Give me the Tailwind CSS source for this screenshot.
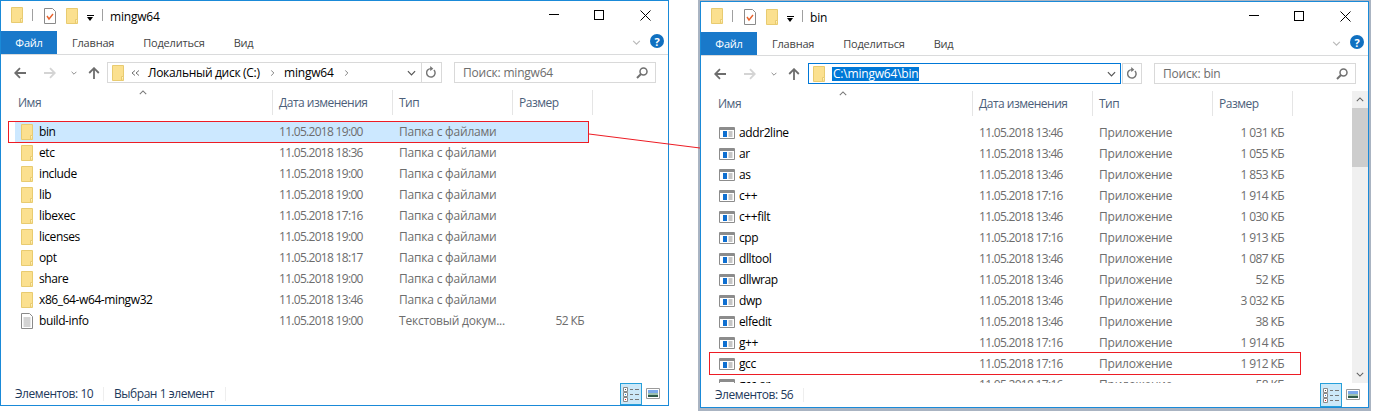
<!doctype html>
<html lang="en">
  <head>
    <meta charset="UTF-8" />
    <title>mingw64 / bin</title>
    <script src="https://cdn.jsdelivr.net/npm/@tailwindcss/browser@4"></script>
  </head>
  <body class="relative w-[1374px] h-[411px] overflow-hidden bg-white font-['Open_Sans',sans-serif] text-[12px] leading-none tracking-[-0.2px]">
    <svg class="hidden">
      <symbol id="folder" viewBox="0 0 12 16">
        <path d="M.5.5h11v15H.5z" fill="#fbe08f" stroke="#e8cb70" />
        <path d="M9.5 15.5v-4h2" fill="#fff3c4" stroke="#e8cb70" />
      </symbol>
      <symbol id="app" viewBox="0 0 16 12">
        <path d="M.5.5h15v11H.5z" fill="#fff" stroke="#8c8c8c" />
        <path d="M1 1h14v2H1z" fill="#8c8c8c" />
        <path d="M4 4h4v6H4z" fill="#0f6fd0" />
        <path d="M9.5 5h4M9.5 7h4M9.5 9h4" stroke="#8c8c8c" />
      </symbol>
      <symbol id="doc" viewBox="0 0 12 16">
        <path d="M.5.5h8l3 3v12H.5z" fill="#fff" stroke="#8a8a8a" />
        <path d="M2.5 5h7M2.5 7h7M2.5 9h7M2.5 11h7M2.5 13h7" stroke="#a8a8a8" />
      </symbol>
      <symbol id="check" viewBox="0 0 12 16">
        <path d="M.5.5h8l3 3v12H.5z" fill="#fff" stroke="#8a8a8a" />
        <path d="M3 8l2 3 4-5" fill="none" stroke="#e8622c" stroke-width="1.4" />
      </symbol>
      <symbol id="back" viewBox="0 0 12 12">
        <path d="M12 6H1.5M6 1.2 1.2 6 6 10.8" fill="none" stroke="currentColor" stroke-width="1.8" />
      </symbol>
      <symbol id="forward" viewBox="0 0 12 12">
        <path d="M0 6h10.5M6 1.2 10.8 6 6 10.8" fill="none" stroke="currentColor" stroke-width="1.8" />
      </symbol>
      <symbol id="up" viewBox="0 0 12 12">
        <path d="M6 12V1.5M1.2 6 6 1.2 10.8 6" fill="none" stroke="currentColor" stroke-width="1.8" />
      </symbol>
      <symbol id="chev" viewBox="0 0 10 6">
        <path d="M1 1l4 4 4-4" fill="none" stroke="currentColor" stroke-width="1.3" />
      </symbol>
      <symbol id="dbl" viewBox="0 0 9 6">
        <path d="M4 .5 1 3l3 2.5M8 .5 5 3l3 2.5" fill="none" stroke="currentColor" />
      </symbol>
      <symbol id="refresh" viewBox="0 0 12 14">
        <path d="M8.6 4.2a4.6 4.6 0 1 1-3-1.4" fill="none" stroke="currentColor" stroke-width="1.6" />
        <path d="M4.6 0v5.4L8 2.8z" fill="currentColor" />
      </symbol>
      <symbol id="search" viewBox="0 0 12 12">
        <circle cx="7.5" cy="4.5" r="3.5" fill="none" stroke="currentColor" stroke-width="1.5" />
        <path d="M5 7l-4 4" stroke="currentColor" stroke-width="2" />
      </symbol>
      <symbol id="details" viewBox="0 0 16 15">
        <path d="M.5.5h4v4h-4zM.5 5.5h4v4h-4zM.5 10.5h4v4h-4z" fill="#fff" stroke="#8a8a8a" />
        <path d="M2 2h1v1H2z" fill="#555" />
        <path d="M2 7h1v1H2z" fill="#2a80d0" />
        <path d="M2 12h1v1H2z" fill="#e02020" />
        <path d="M7 2.5h3M12 2.5h4M7 7.5h3M12 7.5h4M7 12.5h3M12 12.5h4" stroke="#777" />
      </symbol>
      <symbol id="preview" viewBox="0 0 14 11">
        <path d="M.5.5h13v10H.5z" fill="#fff" stroke="#9a9a9a" />
        <path d="M2 2h10v3H2z" fill="#7aa8ea" />
        <path d="M2 5h10v2H2z" fill="#9cc0b0" />
        <path d="M2 7h10v2H2z" fill="#2f5a4a" />
      </symbol>
    </svg>

    <div class="flex items-start">
      <!-- left window -->
      <div class="flex flex-col w-[669px] h-[406px] border border-[#1a8ad8] bg-white">
        <div class="relative h-[30px] shrink-0 flex items-center">
          <svg class="absolute left-[10px] top-[6px] w-[12px] h-[16px]"><use href="#folder" /></svg>
          <span class="absolute left-[31px] top-[8px] w-px h-[12px] bg-[#a0a0a0]"></span>
          <svg class="absolute left-[43px] top-[7px] w-[12px] h-[16px]"><use href="#check" /></svg>
          <svg class="absolute left-[65px] top-[7px] w-[12px] h-[16px]"><use href="#folder" /></svg>
          <span class="absolute left-[86px] top-[14px] w-[7px] h-px bg-black"></span>
          <span class="absolute left-[86px] top-[16px] border-x-[3.5px] border-t-[4px] border-x-transparent border-t-black"></span>
          <span class="absolute left-[101px] top-[8px] w-px h-[12px] bg-[#a0a0a0]"></span>
          <span class="absolute left-[109px] top-[10px] text-black">mingw64</span>
          <svg class="absolute left-[548px] top-[13px] w-[10px] h-px"><rect width="10" height="1" /></svg>
          <span class="absolute left-[593px] top-[9px] w-[10px] h-[10px] border border-black"></span>
          <svg class="absolute left-[639px] top-[9px] w-[11px] h-[11px]" viewBox="0 0 11 11"><path d="M.5.5l10 10M10.5.5l-10 10" stroke="#000" /></svg>
        </div>
        <div class="relative h-[24px] shrink-0 flex items-start border-b border-[#dadbdc] text-[#444] text-[11px]">
          <span class="w-[56px] h-[23px] bg-[#1979ca] text-white flex items-center justify-center">Файл</span>
          <span class="ml-[15px] h-[23px] flex items-center">Главная</span>
          <span class="ml-[29px] h-[23px] flex items-center">Поделиться</span>
          <span class="ml-[29px] h-[23px] flex items-center">Вид</span>
          <svg class="absolute left-[631px] top-[9px] w-[9px] h-[5px] text-[#b8b8b8]"><use href="#chev" /></svg>
          <span class="absolute left-[649px] top-[3px] w-[14px] h-[14px] rounded-full bg-[#1070c0] text-white font-bold text-[11px] flex items-center justify-center">?</span>
        </div>
        <div class="h-[35px] shrink-0 flex items-center text-[#6d6d6d]">
          <svg class="ml-[13px] w-[12px] h-[12px]"><use href="#back" /></svg>
          <svg class="ml-[18px] w-[12px] h-[12px] text-[#d4d4d4]"><use href="#forward" /></svg>
          <svg class="ml-[15px] w-[6px] h-[4px]"><use href="#chev" /></svg>
          <svg class="ml-[11px] w-[12px] h-[12px]"><use href="#up" /></svg>
          <div class="ml-[7px] w-[315px] h-[21px] border border-[#d9d9d9] flex items-center text-black">
            <svg class="ml-[4px] w-[12px] h-[16px]"><use href="#folder" /></svg>
            <svg class="ml-[7px] w-[9px] h-[6px] text-[#707070]"><use href="#dbl" /></svg>
            <span class="ml-[8px] w-[121px] tracking-[-0.3px]">Локальный диск (C:)</span>
            <svg class="-rotate-90 w-[7px] h-[4px] text-[#707070]"><use href="#chev" /></svg>
            <span class="ml-[8px]">mingw64</span>
            <svg class="ml-[9px] -rotate-90 w-[7px] h-[4px] text-[#707070]"><use href="#chev" /></svg>
            <svg class="ml-auto mr-[5px] w-[9px] h-[6px] text-[#555]"><use href="#chev" /></svg>
          </div>
          <div class="w-[20px] h-[21px] border border-l-0 border-[#d9d9d9] flex items-center justify-center">
            <svg class="w-[11px] h-[13px] text-[#777]"><use href="#refresh" /></svg>
          </div>
          <div class="ml-[12px] w-[202px] h-[21px] border border-[#d9d9d9] flex items-center justify-between pl-[8px] pr-[7px]">
            <span>Поиск: mingw64</span>
            <svg class="w-[12px] h-[12px] text-[#707070]"><use href="#search" /></svg>
          </div>
        </div>
        <div class="relative h-[25px] shrink-0 flex items-center text-[#4c607a] tracking-[-0.5px]">
          <svg class="absolute left-[138px] top-0 w-[8px] h-[5px] rotate-180 text-[#777]"><use href="#chev" /></svg>
          <span class="w-[272px] pl-[17px] h-full flex items-center border-r border-[#e5e5e5]">Имя</span>
          <span class="w-[120px] pl-[6px] h-full flex items-center border-r border-[#e5e5e5]">Дата изменения</span>
          <span class="w-[120px] pl-[6px] h-full flex items-center border-r border-[#e5e5e5]">Тип</span>
          <span class="w-[80px] pl-[6px] h-full flex items-center border-r border-[#e5e5e5]">Размер</span>
        </div>
        <div class="flex-1 overflow-hidden pt-[6px] pl-[14px] text-[#6d6d6d]">
          <div class="grid grid-cols-[264px_120px_120px_69px] w-[573px] h-[21px] items-center bg-[#cce8ff]"><span class="flex items-center gap-[6px] pl-[6px] text-black tracking-[-0.4px]"><svg class="w-[12px] h-[16px]"><use href="#folder" /></svg>bin</span><span class="tracking-[-0.7px]">11.05.2018 19:00</span><span>Папка с файлами</span><span></span></div>
          <div class="grid grid-cols-[264px_120px_120px_69px] w-[573px] h-[21px] items-center"><span class="flex items-center gap-[6px] pl-[6px] text-black tracking-[-0.4px]"><svg class="w-[12px] h-[16px]"><use href="#folder" /></svg>etc</span><span class="tracking-[-0.7px]">11.05.2018 18:36</span><span>Папка с файлами</span><span></span></div>
          <div class="grid grid-cols-[264px_120px_120px_69px] w-[573px] h-[21px] items-center"><span class="flex items-center gap-[6px] pl-[6px] text-black tracking-[-0.4px]"><svg class="w-[12px] h-[16px]"><use href="#folder" /></svg>include</span><span class="tracking-[-0.7px]">11.05.2018 19:00</span><span>Папка с файлами</span><span></span></div>
          <div class="grid grid-cols-[264px_120px_120px_69px] w-[573px] h-[21px] items-center"><span class="flex items-center gap-[6px] pl-[6px] text-black tracking-[-0.4px]"><svg class="w-[12px] h-[16px]"><use href="#folder" /></svg>lib</span><span class="tracking-[-0.7px]">11.05.2018 19:00</span><span>Папка с файлами</span><span></span></div>
          <div class="grid grid-cols-[264px_120px_120px_69px] w-[573px] h-[21px] items-center"><span class="flex items-center gap-[6px] pl-[6px] text-black tracking-[-0.4px]"><svg class="w-[12px] h-[16px]"><use href="#folder" /></svg>libexec</span><span class="tracking-[-0.7px]">11.05.2018 17:16</span><span>Папка с файлами</span><span></span></div>
          <div class="grid grid-cols-[264px_120px_120px_69px] w-[573px] h-[21px] items-center"><span class="flex items-center gap-[6px] pl-[6px] text-black tracking-[-0.4px]"><svg class="w-[12px] h-[16px]"><use href="#folder" /></svg>licenses</span><span class="tracking-[-0.7px]">11.05.2018 19:00</span><span>Папка с файлами</span><span></span></div>
          <div class="grid grid-cols-[264px_120px_120px_69px] w-[573px] h-[21px] items-center"><span class="flex items-center gap-[6px] pl-[6px] text-black tracking-[-0.4px]"><svg class="w-[12px] h-[16px]"><use href="#folder" /></svg>opt</span><span class="tracking-[-0.7px]">11.05.2018 18:17</span><span>Папка с файлами</span><span></span></div>
          <div class="grid grid-cols-[264px_120px_120px_69px] w-[573px] h-[21px] items-center"><span class="flex items-center gap-[6px] pl-[6px] text-black tracking-[-0.4px]"><svg class="w-[12px] h-[16px]"><use href="#folder" /></svg>share</span><span class="tracking-[-0.7px]">11.05.2018 19:00</span><span>Папка с файлами</span><span></span></div>
          <div class="grid grid-cols-[264px_120px_120px_69px] w-[573px] h-[21px] items-center"><span class="flex items-center gap-[6px] pl-[6px] text-black tracking-[-0.4px]"><svg class="w-[12px] h-[16px]"><use href="#folder" /></svg>x86_64-w64-mingw32</span><span class="tracking-[-0.7px]">11.05.2018 13:46</span><span>Папка с файлами</span><span></span></div>
          <div class="grid grid-cols-[264px_120px_120px_69px] w-[573px] h-[21px] items-center"><span class="flex items-center gap-[6px] pl-[6px] text-black tracking-[-0.4px]"><svg class="w-[12px] h-[16px]"><use href="#doc" /></svg>build-info</span><span class="tracking-[-0.7px]">11.05.2018 19:00</span><span>Текстовый докум...</span><span class="text-right pr-[4px] tracking-[-0.6px]">52 КБ</span></div>
        </div>
        <div class="relative h-[22px] shrink-0 flex items-center text-[#1e395b] tracking-[-0.45px]">
          <span class="ml-[14px] w-[88px]">Элементов: 10</span>
          <span class="w-px h-[14px] bg-[#eeeeee]"></span>
          <span class="ml-[10px] w-[111px]">Выбран 1 элемент</span>
          <span class="w-px h-[14px] bg-[#eeeeee]"></span>
          <span class="absolute left-[619px] top-0 w-[22px] h-[22px] bg-[#cce8f8] border border-[#26a0da] flex items-center justify-center">
            <svg class="w-[16px] h-[15px]"><use href="#details" /></svg>
          </span>
          <svg class="absolute left-[645px] top-[5px] w-[14px] h-[11px]"><use href="#preview" /></svg>
        </div>
      </div>

      <!-- right window, with its grey edge -->
      <div class="ml-[29px] w-[673px] h-[411px] bg-[#aab4c2] pl-[2px] pr-[2px] pt-[1px] pb-[3px]">
        <div class="flex flex-col h-full border border-[#1a8ad8] bg-white">
          <div class="relative h-[30px] shrink-0 flex items-center">
            <svg class="absolute left-[10px] top-[6px] w-[12px] h-[16px]"><use href="#folder" /></svg>
            <span class="absolute left-[31px] top-[8px] w-px h-[12px] bg-[#a0a0a0]"></span>
            <svg class="absolute left-[43px] top-[7px] w-[12px] h-[16px]"><use href="#check" /></svg>
            <svg class="absolute left-[65px] top-[7px] w-[12px] h-[16px]"><use href="#folder" /></svg>
            <span class="absolute left-[86px] top-[14px] w-[7px] h-px bg-black"></span>
            <span class="absolute left-[86px] top-[16px] border-x-[3.5px] border-t-[4px] border-x-transparent border-t-black"></span>
            <span class="absolute left-[101px] top-[8px] w-px h-[12px] bg-[#a0a0a0]"></span>
            <span class="absolute left-[109px] top-[10px] text-black">bin</span>
            <svg class="absolute left-[548px] top-[13px] w-[10px] h-px"><rect width="10" height="1" /></svg>
            <span class="absolute left-[593px] top-[9px] w-[10px] h-[10px] border border-black"></span>
            <svg class="absolute left-[639px] top-[9px] w-[11px] h-[11px]" viewBox="0 0 11 11"><path d="M.5.5l10 10M10.5.5l-10 10" stroke="#000" /></svg>
          </div>
          <div class="relative h-[24px] shrink-0 flex items-start border-b border-[#dadbdc] text-[#444] text-[11px]">
            <span class="w-[56px] h-[23px] bg-[#1979ca] text-white flex items-center justify-center">Файл</span>
            <span class="ml-[15px] h-[23px] flex items-center">Главная</span>
            <span class="ml-[29px] h-[23px] flex items-center">Поделиться</span>
            <span class="ml-[29px] h-[23px] flex items-center">Вид</span>
            <svg class="absolute left-[631px] top-[9px] w-[9px] h-[5px] text-[#b8b8b8]"><use href="#chev" /></svg>
            <span class="absolute left-[649px] top-[3px] w-[14px] h-[14px] rounded-full bg-[#1070c0] text-white font-bold text-[11px] flex items-center justify-center">?</span>
          </div>
          <div class="h-[35px] shrink-0 flex items-center text-[#6d6d6d]">
            <svg class="ml-[13px] w-[12px] h-[12px]"><use href="#back" /></svg>
            <svg class="ml-[18px] w-[12px] h-[12px] text-[#d4d4d4]"><use href="#forward" /></svg>
            <svg class="ml-[15px] w-[6px] h-[4px]"><use href="#chev" /></svg>
            <svg class="ml-[11px] w-[12px] h-[12px]"><use href="#up" /></svg>
            <div class="ml-[8px] w-[313px] h-[21px] border border-[#0078d7] flex items-center text-black">
              <svg class="ml-[4px] w-[12px] h-[16px]"><use href="#folder" /></svg>
              <span class="ml-[7px] px-px h-[14px] flex items-center bg-[#0078d7] text-white">C:\mingw64\bin</span>
              <svg class="ml-auto mr-[4px] w-[9px] h-[6px] text-[#555]"><use href="#chev" /></svg>
            </div>
            <div class="ml-px w-[20px] h-[21px] border border-[#d9d9d9] flex items-center justify-center">
              <svg class="w-[11px] h-[13px] text-[#777]"><use href="#refresh" /></svg>
            </div>
            <div class="ml-[12px] w-[202px] h-[21px] border border-[#d9d9d9] flex items-center justify-between pl-[8px] pr-[7px]">
              <span>Поиск: bin</span>
              <svg class="w-[12px] h-[12px] text-[#707070]"><use href="#search" /></svg>
            </div>
          </div>
          <div class="flex flex-1 min-h-0">
            <div class="flex flex-col w-[651px]">
              <div class="relative h-[25px] shrink-0 flex items-center text-[#4c607a] tracking-[-0.5px]">
                <svg class="absolute left-[138px] top-0 w-[8px] h-[5px] rotate-180 text-[#777]"><use href="#chev" /></svg>
                <span class="w-[272px] pl-[17px] h-full flex items-center border-r border-[#e5e5e5]">Имя</span>
                <span class="w-[120px] pl-[6px] h-full flex items-center border-r border-[#e5e5e5]">Дата изменения</span>
                <span class="w-[120px] pl-[6px] h-full flex items-center border-r border-[#e5e5e5]">Тип</span>
                <span class="w-[80px] pl-[6px] h-full flex items-center border-r border-[#e5e5e5]">Размер</span>
              </div>
              <div class="flex-1 overflow-hidden pt-[6px] pl-[14px] text-[#6d6d6d]">
                <div class="grid grid-cols-[264px_120px_120px_65px] h-[21px] items-center"><span class="flex items-center gap-[4px] pl-[4px] text-black tracking-[-0.4px]"><svg class="w-[16px] h-[12px]"><use href="#app" /></svg>addr2line</span><span class="tracking-[-0.7px]">11.05.2018 13:46</span><span>Приложение</span><span class="text-right tracking-[-0.6px]">1 031 КБ</span></div>
                <div class="grid grid-cols-[264px_120px_120px_65px] h-[21px] items-center"><span class="flex items-center gap-[4px] pl-[4px] text-black tracking-[-0.4px]"><svg class="w-[16px] h-[12px]"><use href="#app" /></svg>ar</span><span class="tracking-[-0.7px]">11.05.2018 13:46</span><span>Приложение</span><span class="text-right tracking-[-0.6px]">1 055 КБ</span></div>
                <div class="grid grid-cols-[264px_120px_120px_65px] h-[21px] items-center"><span class="flex items-center gap-[4px] pl-[4px] text-black tracking-[-0.4px]"><svg class="w-[16px] h-[12px]"><use href="#app" /></svg>as</span><span class="tracking-[-0.7px]">11.05.2018 13:46</span><span>Приложение</span><span class="text-right tracking-[-0.6px]">1 853 КБ</span></div>
                <div class="grid grid-cols-[264px_120px_120px_65px] h-[21px] items-center"><span class="flex items-center gap-[4px] pl-[4px] text-black tracking-[-0.4px]"><svg class="w-[16px] h-[12px]"><use href="#app" /></svg>c++</span><span class="tracking-[-0.7px]">11.05.2018 17:16</span><span>Приложение</span><span class="text-right tracking-[-0.6px]">1 914 КБ</span></div>
                <div class="grid grid-cols-[264px_120px_120px_65px] h-[21px] items-center"><span class="flex items-center gap-[4px] pl-[4px] text-black tracking-[-0.4px]"><svg class="w-[16px] h-[12px]"><use href="#app" /></svg>c++filt</span><span class="tracking-[-0.7px]">11.05.2018 13:46</span><span>Приложение</span><span class="text-right tracking-[-0.6px]">1 030 КБ</span></div>
                <div class="grid grid-cols-[264px_120px_120px_65px] h-[21px] items-center"><span class="flex items-center gap-[4px] pl-[4px] text-black tracking-[-0.4px]"><svg class="w-[16px] h-[12px]"><use href="#app" /></svg>cpp</span><span class="tracking-[-0.7px]">11.05.2018 17:16</span><span>Приложение</span><span class="text-right tracking-[-0.6px]">1 913 КБ</span></div>
                <div class="grid grid-cols-[264px_120px_120px_65px] h-[21px] items-center"><span class="flex items-center gap-[4px] pl-[4px] text-black tracking-[-0.4px]"><svg class="w-[16px] h-[12px]"><use href="#app" /></svg>dlltool</span><span class="tracking-[-0.7px]">11.05.2018 13:46</span><span>Приложение</span><span class="text-right tracking-[-0.6px]">1 087 КБ</span></div>
                <div class="grid grid-cols-[264px_120px_120px_65px] h-[21px] items-center"><span class="flex items-center gap-[4px] pl-[4px] text-black tracking-[-0.4px]"><svg class="w-[16px] h-[12px]"><use href="#app" /></svg>dllwrap</span><span class="tracking-[-0.7px]">11.05.2018 13:46</span><span>Приложение</span><span class="text-right tracking-[-0.6px]">52 КБ</span></div>
                <div class="grid grid-cols-[264px_120px_120px_65px] h-[21px] items-center"><span class="flex items-center gap-[4px] pl-[4px] text-black tracking-[-0.4px]"><svg class="w-[16px] h-[12px]"><use href="#app" /></svg>dwp</span><span class="tracking-[-0.7px]">11.05.2018 13:46</span><span>Приложение</span><span class="text-right tracking-[-0.6px]">3 032 КБ</span></div>
                <div class="grid grid-cols-[264px_120px_120px_65px] h-[21px] items-center"><span class="flex items-center gap-[4px] pl-[4px] text-black tracking-[-0.4px]"><svg class="w-[16px] h-[12px]"><use href="#app" /></svg>elfedit</span><span class="tracking-[-0.7px]">11.05.2018 13:46</span><span>Приложение</span><span class="text-right tracking-[-0.6px]">38 КБ</span></div>
                <div class="grid grid-cols-[264px_120px_120px_65px] h-[21px] items-center"><span class="flex items-center gap-[4px] pl-[4px] text-black tracking-[-0.4px]"><svg class="w-[16px] h-[12px]"><use href="#app" /></svg>g++</span><span class="tracking-[-0.7px]">11.05.2018 17:16</span><span>Приложение</span><span class="text-right tracking-[-0.6px]">1 914 КБ</span></div>
                <div class="grid grid-cols-[264px_120px_120px_65px] h-[21px] items-center"><span class="flex items-center gap-[4px] pl-[4px] text-black tracking-[-0.4px]"><svg class="w-[16px] h-[12px]"><use href="#app" /></svg>gcc</span><span class="tracking-[-0.7px]">11.05.2018 17:16</span><span>Приложение</span><span class="text-right tracking-[-0.6px]">1 912 КБ</span></div>
                <div class="grid grid-cols-[264px_120px_120px_65px] h-[21px] items-center"><span class="flex items-center gap-[4px] pl-[4px] text-black tracking-[-0.4px]"><svg class="w-[16px] h-[12px]"><use href="#app" /></svg>gcc-ar</span><span class="tracking-[-0.7px]">11.05.2018 17:16</span><span>Приложение</span><span class="text-right tracking-[-0.6px]">58 КБ</span></div>
              </div>
            </div>
            <div class="w-[16px] bg-[#f0f0f0] flex flex-col shrink-0 text-[#606060]">
              <div class="h-[17px] flex items-center justify-center"><svg class="w-[8px] h-[5px] rotate-180"><use href="#chev" /></svg></div>
              <div class="h-[59px] bg-[#cdcdcd]"></div>
              <div class="mt-auto h-[17px] flex items-center justify-center"><svg class="w-[8px] h-[5px]"><use href="#chev" /></svg></div>
            </div>
          </div>
          <div class="relative h-[24px] shrink-0 flex items-center text-[#1e395b] tracking-[-0.45px]">
            <span class="ml-[14px] w-[88px]">Элементов: 56</span>
            <span class="w-px h-[14px] bg-[#eeeeee]"></span>
            <span class="absolute left-[619px] top-0 w-[22px] h-[24px] bg-[#cce8f8] border border-[#26a0da] flex items-center justify-center">
              <svg class="w-[16px] h-[15px]"><use href="#details" /></svg>
            </span>
            <svg class="absolute left-[645px] top-[6px] w-[14px] h-[11px]"><use href="#preview" /></svg>
          </div>
        </div>
      </div>
    </div>

    <!-- red callouts drawn over both windows -->
    <div class="absolute left-[8px] top-[121px] w-[581px] h-[22px] border border-[#ed1c24]"></div>
    <div class="absolute left-[709px] top-[352px] w-[592px] h-[23px] border border-[#ed1c24]"></div>
    <svg class="absolute left-[589px] top-[130px] w-[112px] h-[20px]" viewBox="0 0 112 20"><path d="M0 4l111 14" stroke="#ed1c24" /></svg>
  </body>
</html>
